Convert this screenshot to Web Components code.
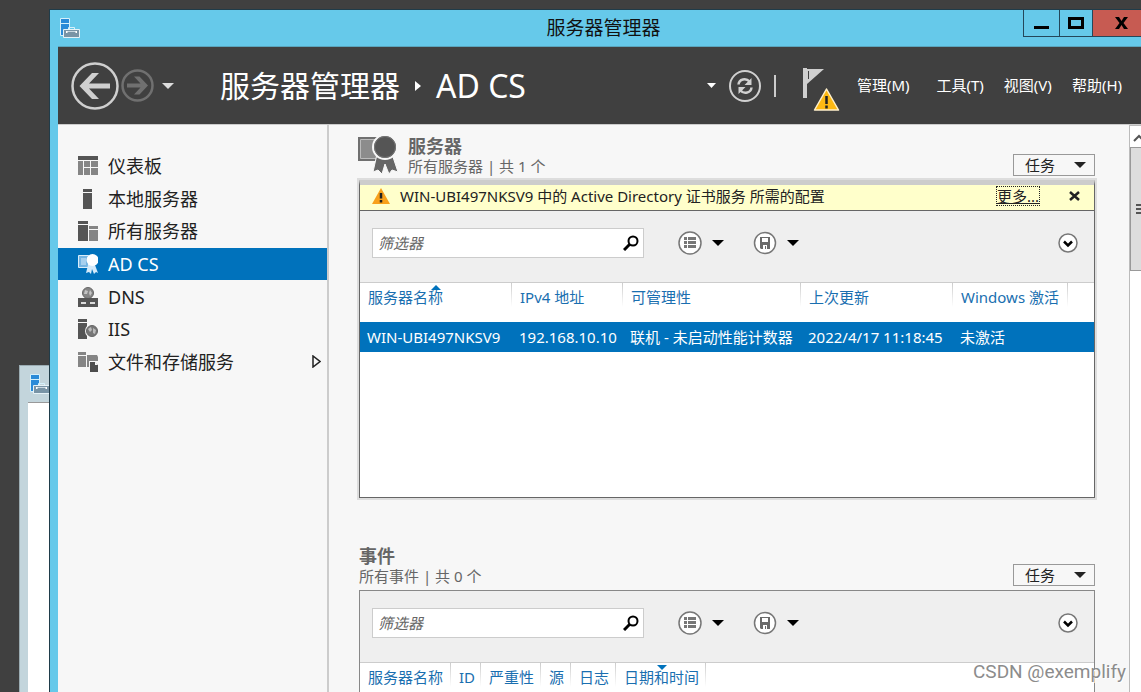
<!DOCTYPE html>
<html lang="zh-CN">
<head>
<meta charset="utf-8">
<title>服务器管理器</title>
<style>
html,body{margin:0;height:100%}
body{font-family:"Noto Sans","Noto Sans CJK SC",sans-serif;font-size:15px;line-height:20px;color:#222;background:#404040;overflow:hidden}
</style>
</head>
<body>
<sm-desktop></sm-desktop>
<script>
const reset = `*{box-sizing:border-box}button{font:inherit;color:inherit;background:none;border:0;padding:0;margin:0;cursor:pointer;white-space:nowrap}svg{display:block;flex:none}a{color:inherit;text-decoration:none}`;
function define(name, css, html){
  customElements.define(name, class extends HTMLElement{
    constructor(){
      super();
      const t=document.createElement('template');
      t.innerHTML=`<style>${reset}${css}</style>${typeof html==='function'?html(this):html}`;
      this.attachShadow({mode:'open'}).append(t.content.cloneNode(true));
    }
  });
}
const icons={
 app:[20,20,'<path d="M.5.5h9v17h-9z" fill="#2b8bd8" stroke="#d5f0fb"/><path d="M1 5.500h8" stroke="#d5f0fb"/><path d="M8.500 11.500v-2h6v2" fill="none" stroke="#d5f0fb"/><path d="M3.500 11.500h16v8h-16z" fill="#7994a6" stroke="#e6f2f7"/><path d="M6 13.500h11" stroke="#c9d8e1"/><path d="M6 13h1.500v2H6zm9.500 0H17v2h-1.500z" fill="#fff"/>'],
 back:[48,48,'<circle cx="24" cy="24" r="22.500" fill="none" stroke="#cfcfcf" stroke-width="2.500"/><path d="M8.500 24 21 11h7L18 21.500h21v5H18L28 37h-7z" fill="#cfcfcf"/>'],
 forward:[33,33,'<circle cx="16.500" cy="16.500" r="15" fill="none" stroke="#707070" stroke-width="2.500"/><path d="M27 16.500 18.500 7.500H13l6.500 7H6v4h13.500l-6.500 7h5.500z" fill="#707070"/>'],
 refresh:[32,32,'<circle cx="16" cy="16" r="15" fill="none" stroke="#d0d0d0" stroke-width="2"/><path d="M9.500 14.500C10 9 17 7.500 20.500 11.500M22.500 17.500C22 23 15 24.500 11.500 20.500" fill="none" stroke="#d0d0d0" stroke-width="2.500"/><path d="M22.500 8v7h-7zM9.500 24v-7h7z" fill="#d0d0d0"/>'],
 flag:[38,46,'<path d="M1 2h4v30H1zM5 3h17L5 18z" fill="#cfcfcf"/><path d="M6.500 5v8" stroke="#404040"/><path d="M24.500 23 36.500 44h-24z" fill="#fdb913" stroke="#fff0ca" stroke-width="1.500" stroke-linejoin="round"/><path d="M24.500 30v8m0 1.500v3" stroke="#222" stroke-width="2.500"/>'],
 warn:[18,16,'<path d="m9 0 9 16H0z" fill="#f8a01b"/><path d="M9 5v5.500m0 1.500v2.500" stroke="#222" stroke-width="2.500"/>'],
 dash:[20,20,'<path d="M0 0h20v4H0z" fill="#555"/><path d="M0 5h5v14H0zm6 0h6v6H6zm7 0h7v6h-7zM6 12h6v7H6zm7 0h7v7h-7z" fill="#858585"/>'],
 local:[20,20,'<path d="M5 0h9v3H5zm0 4h9v16H5z" fill="#555"/>'],
 all:[20,20,'<path d="M0 0h10v3H0zm0 4h10v16H0z" fill="#555"/><path d="M11 5h9v3h-9zm0 4h9v11h-9z" fill="#858585"/>'],
 cert:[20,20,'<path d="M.5 1.500h10v12H.5z" fill="#76b5e2" stroke="#d9edfa"/><path d="M3 4h5v7H3z" fill="#a7d0ee"/><path d="m10 11-2 8 3-1 2 2 1-5 2 5 2-2 2 1-3-8z" fill="#d4eafa"/><circle cx="14.500" cy="6" r="6" fill="#fff"/>'],
 dns:[20,20,'<circle cx="10" cy="6" r="5.500" fill="#858585" stroke="#666"/><path d="m7 3 3 1-1 3-3 0zm5 0 2 3-2 3-1-3z" fill="#c4c4c4"/><path d="M0 11h20v9H0z" fill="#555"/><path d="M3 16h5m4 0h5" stroke="#ddd" stroke-width="2"/>'],
 iis:[20,20,'<path d="M0 0h9v3H0zm0 4h9v16H0z" fill="#555"/><circle cx="14" cy="12" r="7" fill="#f7f7f7"/><circle cx="14" cy="12" r="5.500" fill="#777" stroke="#666"/><path d="m10 10 3-2 1 3-2 2zm5-1 3 2-1 4-2-1z" fill="#bbb"/>'],
 files:[20,20,'<path d="M0 0h8v3H0zm0 4h8v11H0zM9 3h10l1 2v4h-9v6H9z" fill="#858585"/><path d="M12 10h5l3 3v7h-8z" fill="#4d4d4d"/><path d="M17 9.500v3.500h3z" fill="#f7f7f7"/>'],
 bigcert:[41,42,'<path d="M0 3h26v24H0z" fill="#707070"/><path d="M2.500 5.500h20v19h-20z" fill="#8c8c8c" stroke="#bbb"/><path d="m19 20-4 18 5-2 4 4 3-10 4 10 3-4 6 2-6-18z" fill="#666" stroke="#f7f7f7"/><circle cx="27" cy="13" r="12" fill="#555" stroke="#f7f7f7" stroke-width="2"/><circle cx="27" cy="13" r="10.500" fill="none" stroke="#777"/>'],
 search:[16,16,'<circle cx="10" cy="6" r="4.500" fill="none" stroke="#000" stroke-width="2"/><path d="m7 9-6 6" stroke="#000" stroke-width="3"/>'],
 list:[24,24,'<circle cx="12" cy="12" r="11" fill="#fff" stroke="#777" stroke-width="1.500"/><path d="M6 6h3v3H6zm4 0h8v3h-8zm-4 4h3v3H6zm4 0h8v3h-8zm-4 4h3v3H6zm4 0h8v3h-8z" fill="#777"/>'],
 save:[24,24,'<circle cx="12" cy="12" r="10.500" fill="#fff" stroke="#777" stroke-width="1.500"/><path d="M7 6h10v12H8l-1-1z" fill="#6a6a6a"/><path d="M9 7h6v4H9zm1 7h4v4h-1v-3h-1v3h-2z" fill="#fff"/>'],
 expand:[20,20,'<circle cx="10" cy="10" r="9" fill="#fff" stroke="#777" stroke-width="1.500"/><path d="m6 8.500 4 4 4-4" fill="none" stroke="#000" stroke-width="2.500"/>'],
 down:[12,6,'<path d="M0 0h12L6 6z" fill="currentColor"/>'],
 smalldown:[9,5,'<path d="M0 0h9L4.500 5z" fill="currentColor"/>'],
 crumb:[6,10,'<path d="m0 0 6 5-6 5z" fill="#fff"/>'],
 more:[9,13,'<path d="M1 1v11l7-5.500z" fill="none" stroke="#222" stroke-width="1.500"/>'],
 close:[11,10,'<path d="m1 1 9 8M10 1 1 9" stroke="#222" stroke-width="2.500"/>'],
 winclose:[13,12,'<path d="M0 0h4l2.500 4L9 0h4L8.500 6l4.500 6H9L6.500 8 4 12H0l4.500-6z" fill="#000"/>'],
 winmin:[15,12,'<path d="M0 9h15v3H0z" fill="#000"/>'],
 winmax:[16,12,'<path d="M1.500 1.500h13v9h-13z" fill="none" stroke="#000" stroke-width="3"/>'],
 scrollup:[12,8,'<path d="m1 7 5-5 5 5" fill="none" stroke="#555" stroke-width="2"/>']
};
define('sm-icon',':host{display:block;flex:none}',el=>{
  const [w,h,p]=icons[el.getAttribute('name')];
  return `<svg width="${w}" height="${h}" viewBox="0 0 ${w} ${h}" aria-hidden="true">${p}</svg>`;
});
define('sm-titlebar',`:host{display:grid;grid-template-columns:1fr auto 1fr;height:36px;color:#111}
.app{padding:8px 10px}h1{font-size:19px;font-weight:400;line-height:36px;margin:0;padding-left:16px}
.ctl{display:flex;justify-content:flex-end;align-items:flex-start}
.ctl button{display:flex;align-items:center;justify-content:center;height:27px;border:1px solid #24475a;border-top:0;border-right:0}
.min{width:36px}.max{width:33px}.ctl .x{width:49px;background:#c75b52;padding-left:9px}`,
`<div class="app"><sm-icon name="app"></sm-icon></div><h1><slot></slot></h1><div class="ctl"><button class="min" aria-label="最小化"><sm-icon name="winmin"></sm-icon></button><button class="max" aria-label="最大化"><sm-icon name="winmax"></sm-icon></button><button class="x" aria-label="关闭"><sm-icon name="winclose"></sm-icon></button></div>`);
define('sm-navbar',`:host{display:flex;align-items:center;height:78px;background:#404040;color:#fff;padding:0 19px 0 13px;border-top:1px solid #5aa5bd;white-space:nowrap}
.nav{display:flex;align-items:center;gap:2px}.drop{color:#ddd;padding-left:6px}
.path{display:flex;align-items:center;gap:15px;margin-left:46px;flex:1;font-size:30px;line-height:40px}.path b{font-weight:400;font-size:32px}
.tools{display:flex;align-items:center;gap:13px}.sep{width:2px;height:22px;background:#ccc}
.flag{margin:6px 0 0 13px}.menu{display:flex;margin-left:17px;padding-bottom:2px}.m1{margin-right:27px}.m2,.m3{margin-right:20px}`,
`<div class="nav"><button aria-label="后退"><sm-icon name="back"></sm-icon></button><button aria-label="前进"><sm-icon name="forward"></sm-icon></button><button class="drop" aria-label="历史"><sm-icon name="down"></sm-icon></button></div>
<div class="path"><span>服务器管理器</span><sm-icon name="crumb"></sm-icon><b>AD CS</b></div>
<div class="tools"><button aria-label="更多位置"><sm-icon name="smalldown"></sm-icon></button><button aria-label="刷新"><sm-icon name="refresh"></sm-icon></button><span class="sep"></span><button class="flag" aria-label="通知"><sm-icon name="flag"></sm-icon></button></div>
<div class="menu"><button class="m1">管理(M)</button><button class="m2">工具(T)</button><button class="m3">视图(V)</button><button>帮助(H)</button></div>`);
define('sm-nav-item',`:host{display:block}a{display:flex;align-items:center;height:100%;padding:0 6px 0 20px;gap:10px;font-size:18px;line-height:24px}
span{flex:1}:host([active]) a{background:#0072bc;color:#fff}`,
el=>`<a href="#"><sm-icon name="${el.getAttribute('icon')}"></sm-icon><span><slot></slot></span>${el.hasAttribute('expandable')?'<sm-icon name="more"></sm-icon>':''}</a>`);
define('sm-sidebar',`:host{display:block;border-right:2px solid #ccc;padding-top:25px}nav{display:grid;grid-auto-rows:1fr;height:228px}`,
`<nav><sm-nav-item icon="dash">仪表板</sm-nav-item><sm-nav-item icon="local">本地服务器</sm-nav-item><sm-nav-item icon="all">所有服务器</sm-nav-item><sm-nav-item icon="cert" active>AD CS</sm-nav-item><sm-nav-item icon="dns">DNS</sm-nav-item><sm-nav-item icon="iis">IIS</sm-nav-item><sm-nav-item icon="files" expandable>文件和存储服务</sm-nav-item></nav>`);
define('sm-toolbar',`:host{display:flex;align-items:center;height:72px;background:#efefef;border-bottom:1px solid #ccc;padding:0 16px 8px 12px}
.box{display:flex;align-items:center;width:272px;height:30px;background:#fff;border:1px solid #ccc;padding:0 4px 0 5px}
input{flex:1;min-width:0;border:0;outline:0;padding:0;font:inherit;font-style:italic;background:none}input::placeholder{color:#666;opacity:1}
.g{display:flex;align-items:center;gap:10px;color:#000;margin-left:34px}.g+.g{margin-left:29px}.exp{margin-left:auto}`,
`<div class="box"><input type="text" placeholder="筛选器" aria-label="筛选器"><button aria-label="搜索"><sm-icon name="search"></sm-icon></button></div>
<div class="g"><button aria-label="查询条件"><sm-icon name="list"></sm-icon></button><button aria-label="条件菜单"><sm-icon name="down"></sm-icon></button></div>
<div class="g"><button aria-label="保存查询"><sm-icon name="save"></sm-icon></button><button aria-label="保存菜单"><sm-icon name="down"></sm-icon></button></div>
<button class="exp" aria-label="展开"><sm-icon name="expand"></sm-icon></button>`);
define('sm-notice',`:host{display:flex;align-items:center;height:26px;background:#ffffcb;border-bottom:1px solid #666;padding:0 14px 4px 12px;white-space:nowrap}
.t{flex:1;padding-left:10px}a{text-decoration:underline;outline:1px dotted #222;line-height:18px}button{margin-left:30px}`,
`<sm-icon name="warn"></sm-icon><span class="t"><slot></slot></span><a href="#">更多...</a><button aria-label="关闭通知"><sm-icon name="close"></sm-icon></button>`);
define('sm-section',`:host{display:block}header{display:flex;align-items:flex-end;padding:0 0 4px}
.txt{flex:1;color:#666}h2{margin:0;font-size:18px;line-height:20px;font-weight:700;color:#666}p{margin:0}
header>sm-icon{margin:0 9px 0 -1px}
button{display:flex;align-items:center;gap:19px;width:82px;height:22px;border:1px solid #999;padding:0 8px 0 11px;line-height:20px;background:#f7f7f7}
.panel{border:1px solid #888;background:#fff}
:host([raised]) .panel{border-color:#666;border-top:5px solid #ccc;box-shadow:0 0 0 2px #ddd}`,
el=>`<header>${el.hasAttribute('icon')?`<sm-icon name="${el.getAttribute('icon')}"></sm-icon>`:''}<div class="txt"><h2>${el.getAttribute('heading')}</h2><p>${el.getAttribute('sub')}</p></div><button>任务<sm-icon name="down"></sm-icon></button></header><div class="panel"><slot></slot></div>`);
const tableCss=`:host{display:block;overflow:hidden}table{border-collapse:collapse;table-layout:fixed;width:100%;white-space:nowrap}
th,td{padding:0 0 0 8px;text-align:left;font-weight:400}th{position:relative;height:39px;color:#1a6fb0;vertical-align:top;padding-top:4px;background:linear-gradient(#ccc,#fff) right top/1px 24px no-repeat}
td{height:30px;background:#0072bc;color:#fff;padding-left:7px}.sort{position:absolute;left:50%;top:2px;width:0;border:5px solid transparent;border-top:0;border-bottom-color:#0072bc}
.sort.desc{border-top:5px solid #0072bc;border-bottom:0}th:last-child{background:none}`;
define('sm-server-table',tableCss+'.sort{margin-left:-5px}',`<table><colgroup><col style="width:152px"><col style="width:111px"><col style="width:178px"><col style="width:152px"><col style="width:115px"><col></colgroup><thead><tr><th>服务器名称<i class="sort"></i></th><th>IPv4 地址</th><th>可管理性</th><th>上次更新</th><th>Windows 激活</th><th></th></tr></thead><tbody><tr><td>WIN-UBI497NKSV9</td><td>192.168.10.10</td><td>联机 - 未启动性能计数器</td><td>2022/4/17 11:18:45</td><td>未激活</td><td></td></tr></tbody></table>`);
define('sm-event-table',tableCss+'.sort{margin-left:-4px}',`<table><colgroup><col style="width:91px"><col style="width:30px"><col style="width:60px"><col style="width:30px"><col style="width:45px"><col style="width:90px"><col></colgroup><thead><tr><th>服务器名称</th><th>ID</th><th>严重性</th><th>源</th><th>日志</th><th>日期和时间<i class="sort desc"></i></th><th></th></tr></thead></table>`);
define('sm-scrollbar',`:host{display:block;background:#fff;border-left:1px solid #bbb;overflow:hidden}
.up{height:22px;padding:8px 0 0 3px;border-top:1px solid #bbb}.thumb{display:flex;flex-direction:column;justify-content:center;gap:2px;height:124px;background:#ddd;border:1px solid #999;border-right:0;padding-left:5px}.thumb i{height:2px;background:#555}`,
`<div class="up"><sm-icon name="scrollup"></sm-icon></div><div class="thumb"><i></i><i></i><i></i></div>`);
define('sm-main',`:host{display:block;padding:9px 34px 0 30px;overflow:hidden}sm-section+sm-section{margin-top:48px}sm-server-table{min-height:214px}sm-event-table{min-height:120px}`,
`<sm-section raised icon="bigcert" heading="服务器" sub="所有服务器 | 共 1 个"><sm-notice>WIN-UBI497NKSV9 中的 Active Directory 证书服务 所需的配置</sm-notice><sm-toolbar></sm-toolbar><sm-server-table></sm-server-table></sm-section>
<sm-section heading="事件" sub="所有事件 | 共 0 个"><sm-toolbar></sm-toolbar><sm-event-table></sm-event-table></sm-section>`);
define('sm-window',`:host{display:flex;flex-direction:column;background:#66c9ea;border:solid #1f3c4a;border-width:1px 0 0 1px;padding-left:8px;overflow:hidden}
sm-titlebar{margin-left:-8px}.body{flex:1;min-height:0;display:grid;grid-template-columns:271px 1fr 12px;background:#f7f7f7;border-top:1px solid #ccc}`,
`<sm-titlebar>服务器管理器</sm-titlebar><sm-navbar></sm-navbar><div class="body"><sm-sidebar></sm-sidebar><sm-main></sm-main><sm-scrollbar></sm-scrollbar></div>`);
define('sm-desktop',`:host{display:grid;box-sizing:border-box;height:100vh;padding:9px 0 0 49px;position:relative}
.behind{position:absolute;left:19px;top:365px;bottom:0;width:60px;background:#c3d5dc;border:1px solid #9bacb3;border-bottom:0;padding:8px 0 0 8px;display:flex;flex-direction:column;gap:8px}
.behind sm-icon{padding-left:2px}.page{flex:1;background:#fff;border-top:1px solid #999}
sm-window{position:relative;min-height:0}.mark{position:absolute;right:15px;bottom:8px;font:19px/24px Roboto,"Liberation Sans",sans-serif;color:#8c8c8c;text-shadow:1px 1px #fff}`,
`<div class="behind"><sm-icon name="app"></sm-icon><div class="page"></div></div><sm-window></sm-window><div class="mark">CSDN @exemplify</div>`);
</script>
</body>
</html>
